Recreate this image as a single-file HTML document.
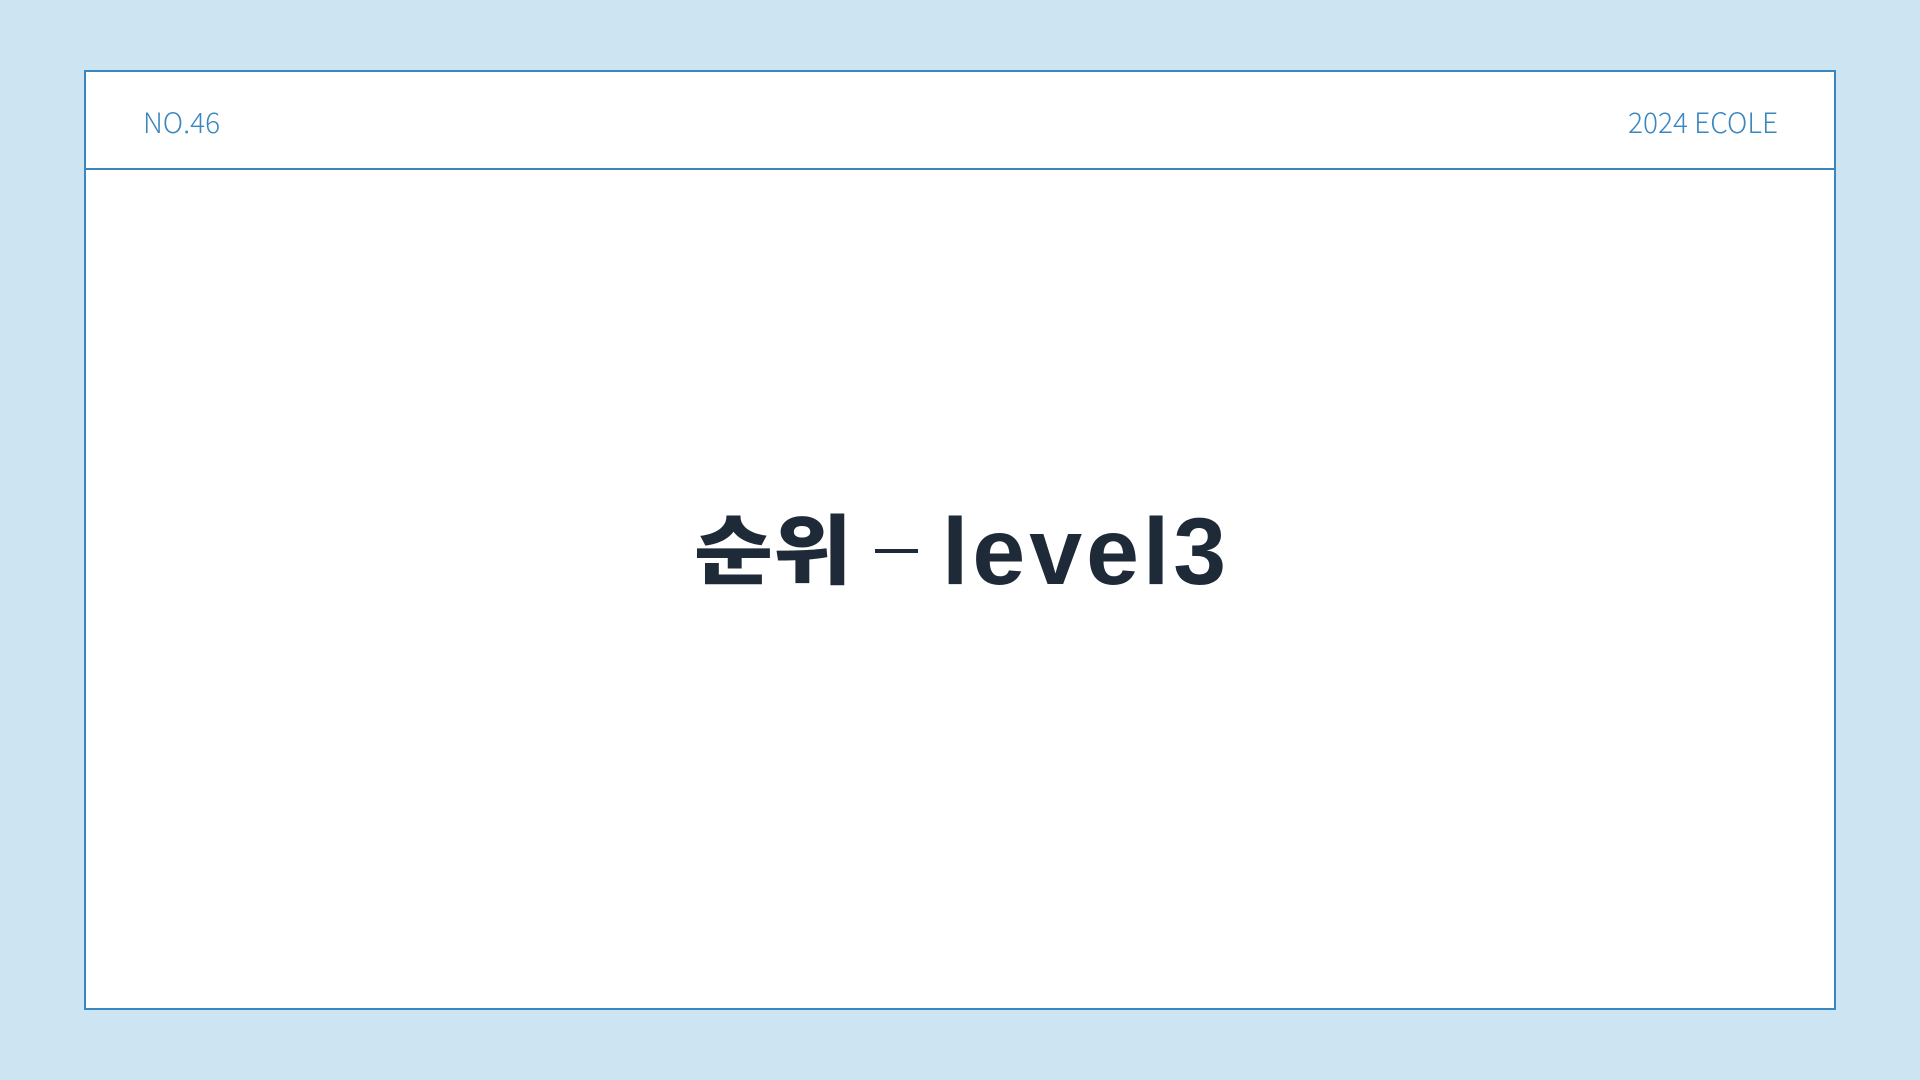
<!DOCTYPE html>
<html><head><meta charset="utf-8"><style>
html,body{margin:0;padding:0}
body{width:1920px;height:1080px;background:#cde4f3;position:relative;overflow:hidden;font-family:"Liberation Sans","Noto Sans CJK KR",sans-serif}
.box{position:absolute;left:84px;top:70px;width:1752px;height:940px;background:#fff;border:2px solid #3a86bf;box-sizing:border-box}
.hdr{position:absolute;left:0;top:0;right:0;height:96px;border-bottom:2px solid #3a86bf}
.t{position:absolute;top:30px;font-size:28px;color:#3a86bf;font-weight:300;font-family:"Noto Sans CJK KR","Liberation Sans",sans-serif;line-height:40px}
.ko{position:absolute;left:694px;top:507px;font-size:76px;line-height:76px;font-weight:900;color:#1e2a38;font-family:"Noto Sans CJK KR",sans-serif;transform:scaleX(1.13);transform-origin:left top;white-space:nowrap}
.dash{position:absolute;left:875px;top:549px;width:43px;height:4px;background:#1e2a38}
.en{position:absolute;left:942px;top:505px;font-size:95px;line-height:95px;font-weight:700;color:#1e2a38;letter-spacing:4px;white-space:nowrap}
</style></head><body>
<div class="box"><div class="hdr"><div class="t" style="left:57px">NO.46</div><div class="t" style="right:56px">2024 ECOLE</div></div></div>
<div class="ko">순위</div>
<div class="dash"></div>
<div class="en">level3</div>
</body></html>
